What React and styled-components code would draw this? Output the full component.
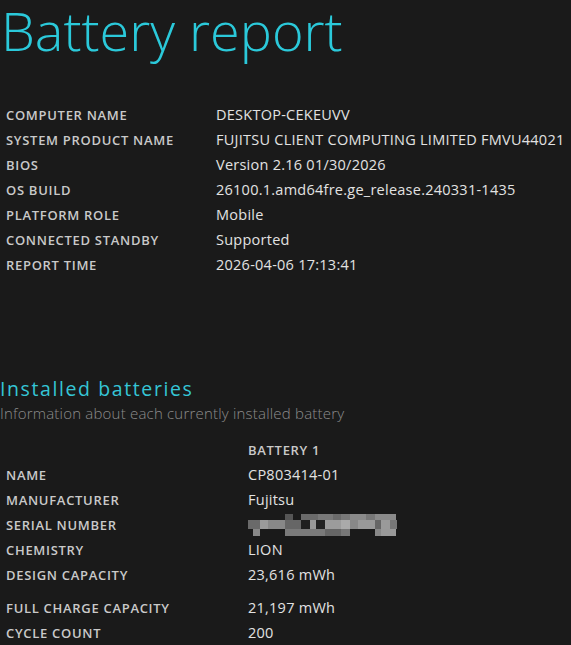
import React from 'react'
import styled, { createGlobalStyle } from 'styled-components'

const systemInfo = [
    ['COMPUTER NAME', 'DESKTOP-CEKEUVV'],
    ['SYSTEM PRODUCT NAME', 'FUJITSU CLIENT COMPUTING LIMITED FMVU44021'],
    ['BIOS', 'Version 2.16 01/30/2026'],
    ['OS BUILD', '26100.1.amd64fre.ge_release.240331-1435'],
    ['PLATFORM ROLE', 'Mobile'],
    ['CONNECTED STANDBY', 'Supported'],
    ['REPORT TIME', '2026-04-06 17:13:41'],
]

// blurred serial number blocks: [x0, x1, colour] per row
const mosaic = [
    { y: 0, h: 6, cells: [[37, 45, '#555'], [53, 70, '#6a6a6a'], [70, 85, '#787878'], [85, 93, '#6a6a6a'], [93, 102, '#787878'], [102, 118, '#8a8a8a'], [118, 127, '#777'], [127, 148, '#8a8a8a']] },
    { y: 6, h: 9, cells: [[0, 12, '#6a6a6a'], [12, 20, '#9a9a9a'], [20, 37, '#888'], [37, 53, '#666'], [53, 62, '#1f1f1f'], [62, 68, '#999'], [68, 77, '#222'], [77, 93, '#9c9c9c'], [93, 102, '#aaa'], [102, 110, '#888'], [110, 127, '#999'], [127, 133, '#666'], [133, 142, '#9a9a9a'], [142, 149, '#777']] },
    { y: 15, h: 7, cells: [[5, 12, '#888'], [37, 77, '#7a7a7a'], [77, 93, '#666'], [93, 102, '#777'], [127, 133, '#888'], [133, 148, '#999']] },
]

function Mosaic() {
    return (
        <svg width="150" height="22" viewBox="0 0 150 22">
            {mosaic.map((row) =>
                row.cells.map(([a, b, c]) => (
                    <rect key={row.y + '-' + a} x={a} y={row.y} width={b - a} height={row.h} fill={c} />
                ))
            )}
        </svg>
    )
}

function App() {
    return (
        <Page>
            <GlobalStyle />
            <Title>Battery report</Title>
            <InfoTable>
                {systemInfo.map(([label, value]) => (
                    <Row key={label} $labelWidth={210}>
                        <Label>{label}</Label>
                        <Value>{value}</Value>
                    </Row>
                ))}
            </InfoTable>

            <Section>
                <SectionTitle>Installed batteries</SectionTitle>
                <SectionNote>Information about each currently installed battery</SectionNote>
            </Section>

            <BatteryTable>
                <Row $labelWidth={242}>
                    <Label />
                    <Label>BATTERY 1</Label>
                </Row>
                <Row $labelWidth={242}>
                    <Label>NAME</Label>
                    <Value>CP803414-01</Value>
                </Row>
                <Row $labelWidth={242}>
                    <Label>MANUFACTURER</Label>
                    <Value>Fujitsu</Value>
                </Row>
                <Row $labelWidth={242}>
                    <Label>SERIAL NUMBER</Label>
                    <Value><Mosaic /></Value>
                </Row>
                <Row $labelWidth={242}>
                    <Label>CHEMISTRY</Label>
                    <Value>LION</Value>
                </Row>
                <Row $labelWidth={242}>
                    <Label>DESIGN CAPACITY</Label>
                    <Value>23,616 mWh</Value>
                </Row>
                <Row $labelWidth={242} $gapTop={8}>
                    <Label>FULL CHARGE CAPACITY</Label>
                    <Value>21,197 mWh</Value>
                </Row>
                <Row $labelWidth={242}>
                    <Label>CYCLE COUNT</Label>
                    <Value>200</Value>
                </Row>
            </BatteryTable>
        </Page>
    )
}

const GlobalStyle = createGlobalStyle`
    html, body {
        margin: 0;
        padding: 0;
        background: #1a1a1a;
    }
    body {
        font-family: 'Open Sans', 'Liberation Sans', sans-serif;
        overflow: hidden;
    }
`

const Page = styled.div`
    background: #1a1a1a;
    min-height: 645px;
    color: #dcdcdc;
`

const Title = styled.h1`
    margin: 0;
    padding: 0 0 0 1px;
    font-family: 'Open Sans', sans-serif;
    font-weight: 300;
    font-size: 54px;
    line-height: 60px;
    letter-spacing: 0;
    color: #2bc9da;
    white-space: nowrap;
`

const InfoTable = styled.div`
    display: flex;
    flex-direction: column;
    padding: 42px 0 0 6px;
`

const Row = styled.div`
    display: grid;
    grid-template-columns: ${p => p.$labelWidth}px auto;
    align-items: center;
    height: 25px;
    margin-top: ${p => p.$gapTop || 0}px;
`

const Label = styled.div`
    font-family: 'Open Sans', sans-serif;
    font-size: 13px;
    font-weight: 600;
    letter-spacing: 0.7px;
    color: #c9c9c9;
    white-space: nowrap;
`

const Value = styled.div`
    font-family: 'Open Sans', sans-serif;
    font-size: 14.5px;
    font-weight: 400;
    letter-spacing: 0.25px;
    color: #e2e2e2;
    white-space: nowrap;
    display: flex;
    align-items: center;
`

const Section = styled.div`
    padding-top: 100px;
`

const SectionTitle = styled.h2`
    margin: 0;
    font-family: 'Open Sans', sans-serif;
    font-weight: 400;
    font-size: 19.5px;
    line-height: 24px;
    letter-spacing: 1.6px;
    color: #35c6d6;
`

const SectionNote = styled.div`
    font-family: 'Open Sans', sans-serif;
    font-weight: 300;
    font-size: 15px;
    line-height: 24px;
    letter-spacing: 0.2px;
    color: #8c8c8c;
`

const BatteryTable = styled.div`
    display: flex;
    flex-direction: column;
    padding: 12px 0 0 6px;
`

export default App
